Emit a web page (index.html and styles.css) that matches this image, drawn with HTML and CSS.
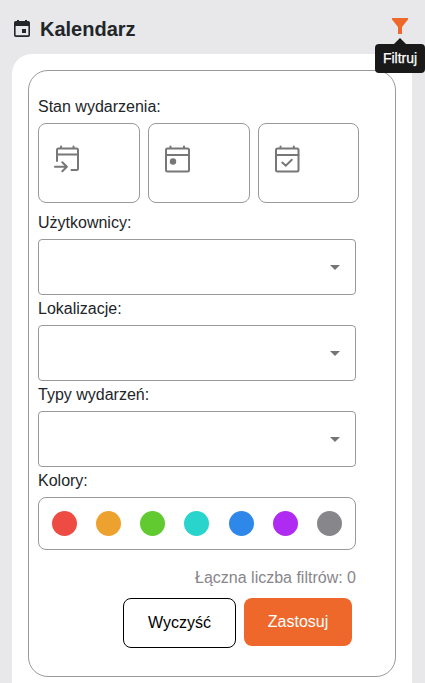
FILE: index.html
```html
<!DOCTYPE html>
<html lang="pl">
<head>
<meta charset="utf-8">
<title>Kalendarz</title>
<link rel="stylesheet" href="styles.css">
</head>
<body>
<header class="topbar">
  <svg class="title-icon" viewBox="0 0 16 17"><path fill="#222529" fill-rule="evenodd" d="M3 0h2v1h6V0h2v1h1.2Q16 1 16 2.8v12.4Q16 17 14.2 17H1.8Q0 17 0 15.2V2.8Q0 1 1.8 1H3zM1.6 6v9.3h12.8V6zM8 9h4v4H8z"/></svg>
  <h1 class="title">Kalendarz</h1>
  <div class="filter">
    <svg class="funnel" viewBox="0 0 16 16"><path fill="#ee682b" d="M0 0h16v1.5L10 9v7H6V9L0 1.5z"/></svg>
    <div class="tooltip">Filtruj</div>
  </div>
</header>
<main class="panel">
  <section class="card">
    <div class="label state-label">Stan wydarzenia:</div>
    <div class="states">
      <div class="tile"><svg class="state-icon" viewBox="0 0 26 28"><g fill="none" stroke="#777" stroke-width="2" stroke-linecap="round" stroke-linejoin="round"><path d="M3 16V5Q3 3.500 4.500 3.500H22.500Q24 3.500 24 5V23.500Q24 25 22.500 25H17.500M3 9.500H24M7 1.500V3M19.500 1.500V3M1 21.700H12.500M8.300 17.200L12.900 21.700L8.300 26.200"/></g></svg></div>
      <div class="tile"><svg class="state-icon" viewBox="0 0 26 28"><g fill="none" stroke="#777" stroke-width="2" stroke-linecap="round"><rect x="2" y="3.500" width="23" height="23" rx="1.500"/><path d="M2 10H25M6.500 1.500V3M20 1.500V3"/></g><circle cx="9" cy="16.500" r="3.200" fill="#777"/></svg></div>
      <div class="tile"><svg class="state-icon" viewBox="0 0 26 28"><g fill="none" stroke="#777" stroke-width="2" stroke-linecap="round"><rect x="2" y="3.500" width="22.500" height="23" rx="1.500"/><path d="M2 10H24.500M6.500 1.500V3M19.800 1.500V3M8.300 17.500L11.800 20.700L17.800 14.700"/></g></svg></div>
    </div>
    <div class="label first-gap">Użytkownicy:</div>
    <div class="select"><span class="caret"></span></div>
    <div class="label">Lokalizacje:</div>
    <div class="select"><span class="caret"></span></div>
    <div class="label">Typy wydarzeń:</div>
    <div class="select"><span class="caret"></span></div>
    <div class="label">Kolory:</div>
    <div class="colors">
      <span class="dot red"></span><span class="dot orange"></span><span class="dot green"></span><span class="dot teal"></span><span class="dot blue"></span><span class="dot purple"></span><span class="dot gray"></span>
    </div>
    <div class="count">Łączna liczba filtrów: 0</div>
    <div class="actions">
      <button class="btn clear">Wyczyść</button>
      <button class="btn apply">Zastosuj</button>
    </div>
  </section>
</main>
</body>
</html>
```
FILE: styles.css
```css
* { box-sizing: border-box; }
body {
  margin: 0;
  height: 683px;
  overflow: hidden;
  background: #e8e8ea;
  color: #222529;
  font: 16px/24px "Liberation Sans", Arial, sans-serif;
}
.topbar {
  display: flex;
  align-items: flex-start;
  height: 54px;
  padding: 0 17px 0 14px;
}
.title-icon { width: 16px; height: 17px; margin-top: 20px; }
.title { margin: 17px 0 0 10px; font-size: 20px; line-height: 24px; }
.filter { position: relative; width: 16px; margin: 18px 0 0 auto; }
.funnel { display: block; width: 16px; height: 16px; }
.tooltip {
  position: absolute;
  top: 26px;
  left: -17px;
  width: 50px;
  height: 29px;
  border-radius: 4px;
  background: #191919;
  color: #fff;
  font-size: 14px;
  line-height: 29px;
  text-align: center;
  -webkit-text-stroke: 0.25px #fff;
  z-index: 1;
}
.tooltip::before {
  content: "";
  position: absolute;
  top: -6px;
  left: 19px;
  border: 6px solid transparent;
  border-top: 0;
  border-bottom-color: #191919;
}
.panel {
  height: 660px;
  margin: 0 13px 0 12px;
  padding: 16px;
  border-radius: 20px 0 0 0;
  background: #fff;
}
.card {
  width: 368px;
  height: 607px;
  padding: 21px 39px 0 9px;
  border: 1px solid #999;
  border-radius: 20px;
}
.label { height: 30px; line-height: 28px; }
.label.state-label { height: 31px; line-height: 30px; }
.label.first-gap { margin-top: 6px; }
.states {
  display: grid;
  grid-template-columns: 102px 102px 101px;
  gap: 8px;
}
.tile { height: 80px; padding: 21px 15px; border: 1px solid #999; border-radius: 8px; }
.state-icon { display: block; width: 26px; height: 28px; }
.select {
  display: flex;
  align-items: center;
  justify-content: flex-end;
  height: 56px;
  padding-right: 15px;
  border: 1px solid #999;
  border-radius: 4px;
}
.caret { border: 5px solid transparent; border-top-color: #757575; border-bottom: 0; }
.colors {
  display: flex;
  align-items: center;
  justify-content: space-between;
  height: 53px;
  padding: 0 13px;
  border: 1px solid #999;
  border-radius: 8px;
}
.dot { width: 25px; height: 25px; border-radius: 50%; }
.red { background: #ee4b43; }
.orange { background: #eda22f; }
.green { background: #60ca30; }
.teal { background: #29d4cd; }
.blue { background: #2e88ea; }
.purple { background: #af2bf2; }
.gray { background: #87868b; }
.count { margin-top: 16px; color: #87868b; text-align: right; }
.actions { display: flex; justify-content: flex-end; align-items: flex-start; gap: 8px; margin: 8px 4px 0 0; }
.btn { padding: 0; border: 0; border-radius: 8px; font: inherit; }
.clear { width: 113px; height: 50px; border: 1px solid #000; background: #fff; color: #000; }
.apply { width: 108px; height: 48px; background: #ee682b; color: #fff; }
```
